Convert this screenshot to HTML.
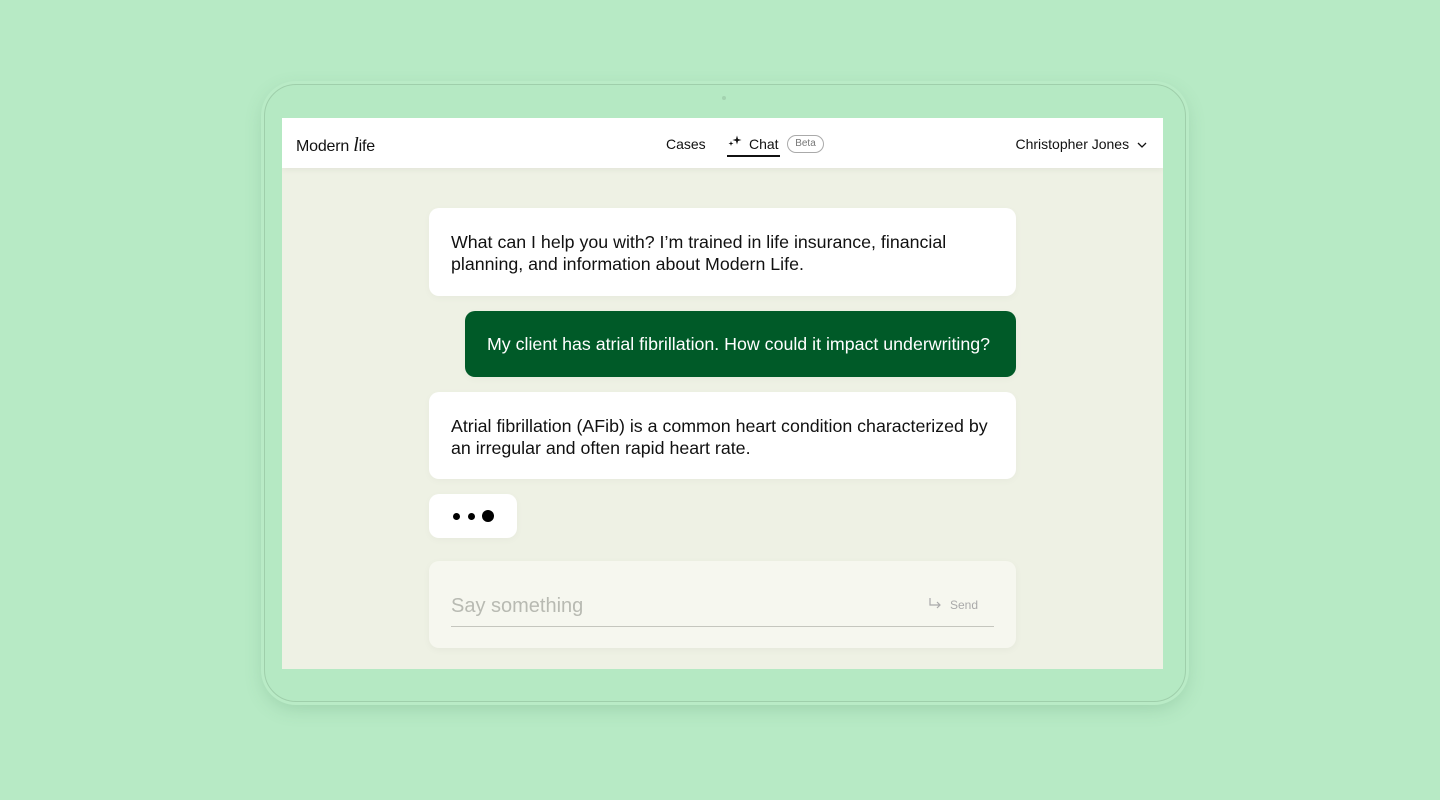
<!DOCTYPE html>
<html><head><meta charset="utf-8"><style>
*{margin:0;padding:0;box-sizing:border-box}
body{width:1440px;height:800px;background:#b7eac5;font-family:"Liberation Sans",sans-serif;position:relative;overflow:hidden;color:#111}
.frame{position:absolute;left:264px;top:84px;width:922px;height:618px;border-radius:32px;background:#b5e9c3;border:1.5px solid #9fcfab;box-shadow:0 0 0 3px #b9ebc6,0 6px 18px rgba(80,140,100,.25)}
.cam{position:absolute;left:722px;top:96px;width:4px;height:4px;border-radius:50%;background:#a3d3b0}
.screen{position:absolute;left:282px;top:118px;width:881px;height:551px;background:#eef1e4;overflow:hidden}
.hdr{position:absolute;left:0;top:0;width:881px;height:50px;background:#fff;box-shadow:0 2px 6px rgba(0,0,0,.05)}
.logo{position:absolute;left:14px;top:17px;font-size:16px;line-height:1;letter-spacing:-.2px}
.logo i{font-family:"Liberation Serif",serif;font-style:italic;font-size:20px;line-height:1}
.nav{position:absolute;top:18px;font-size:14px}
.ul{position:absolute;left:445px;top:37px;width:53px;height:1.5px;background:#111}
.beta{position:absolute;left:505px;top:17px;width:37px;height:18px;border:1px solid #aaa;border-radius:9px;font-size:10px;color:#777;text-align:center;line-height:16px}
.user{position:absolute;right:16px;top:18px;font-size:14px}
.b{position:absolute;background:#fff;border-radius:10px;font-size:17.8px;line-height:22px;padding:0 22px;white-space:nowrap;box-shadow:0 2px 8px rgba(0,0,0,.03)}
.g{background:#005a28;color:#fff}
.dot{position:absolute;background:#000;border-radius:50%}
.inp{position:absolute;left:147px;top:443px;width:587px;height:87px;background:#f6f7ef;border-radius:10px;box-shadow:0 2px 8px rgba(0,0,0,.04)}
</style></head><body>
<div class="frame"></div><div class="cam"></div>
<div class="screen">
 <div class="hdr">
  <div class="logo">Modern <i>l</i>ife</div>
  <div class="nav" style="left:384px">Cases</div>
  <svg style="position:absolute;left:446px;top:17px" width="14" height="12" viewBox="0 0 14 12"><path d="M9 0.5L10 4 13.5 5 10 6 9 9.5 8 6 4.5 5 8 4Z" fill="#111"/><path d="M3 6L3.6 7.9 5.5 8.5 3.6 9.1 3 11 2.4 9.1 .5 8.5 2.4 7.9Z" fill="#111"/></svg>
  <div class="nav" style="left:467px">Chat</div>
  <div class="ul"></div>
  <div class="beta">Beta</div>
  <div class="user">Christopher Jones <svg width="10" height="8" viewBox="0 0 10 8" style="margin-left:4px"><path d="M1 2l4 4 4-4" stroke="#111" stroke-width="1.3" fill="none"/></svg></div>
 </div>
 <div class="b" style="left:147px;top:90px;width:587px;height:88px;padding-top:23px">What can I help you with? I’m trained in life insurance, financial<br>planning, and information about Modern Life.</div>
 <div class="b g" style="left:183px;top:193px;width:551px;height:66px;padding-top:22px">My client has atrial fibrillation. How could it impact underwriting?</div>
 <div class="b" style="left:147px;top:274px;width:587px;height:87px;padding-top:23px">Atrial fibrillation (AFib) is a common heart condition characterized by<br>an irregular and often rapid heart rate.</div>
 <div class="b" style="left:147px;top:376px;width:88px;height:44px"></div>
 <div class="dot" style="left:171px;top:395px;width:7px;height:7px"></div>
 <div class="dot" style="left:186px;top:395px;width:7px;height:7px"></div>
 <div class="dot" style="left:200px;top:392px;width:12px;height:12px"></div>
 <div class="inp">
  <div style="position:absolute;left:22px;top:34px;font-size:20px;color:#b8bab2">Say something</div>
  <svg style="position:absolute;left:499px;top:36px" width="14" height="13" viewBox="0 0 14 13"><path d="M2 1v7h10M9 5l3 3-3 3" stroke="#aaa" stroke-width="1.2" fill="none"/></svg>
  <div style="position:absolute;left:521px;top:37px;font-size:12px;color:#aaa">Send</div>
  <div style="position:absolute;left:22px;top:65px;width:543px;height:1px;background:#c5c6be"></div>
 </div>
</div>
</body></html>
